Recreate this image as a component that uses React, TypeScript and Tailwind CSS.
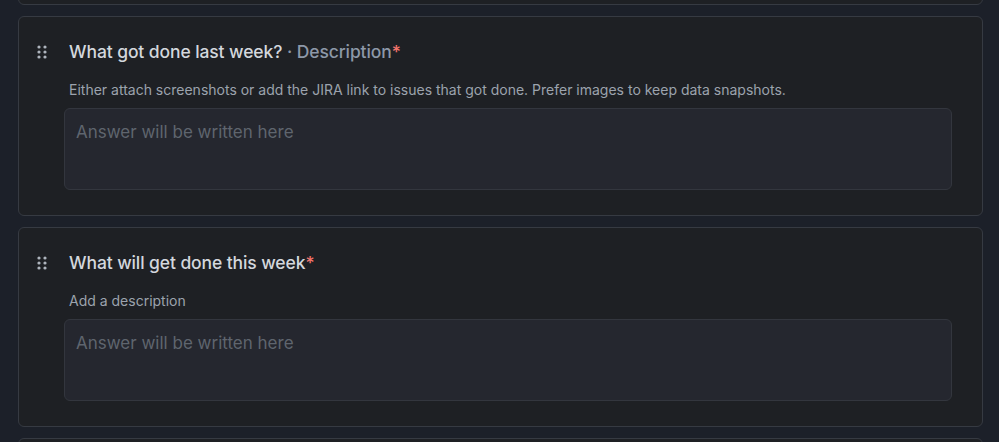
import React from "react";

const DragHandle = () => (
  <svg width="10" height="14" viewBox="0 0 10 14" className="shrink-0">
    {[0, 1, 2].map((r) =>
      [0, 1].map((c) => (
        <circle key={`${r}-${c}`} cx={2 + c * 6} cy={2 + r * 5} r={1.6} fill="#aeb4bd" />
      ))
    )}
  </svg>
);

function QuestionCard(props: { title: string; sub?: string; desc: string }) {
  return (
    <div className="rounded-md border border-[#363a42] bg-[#1e2024] pl-[16px] pr-[30px] pt-[22px] pb-[25px]">
      <div className="flex items-center h-[26px]">
        <div className="w-[34px] flex pl-[2px]">
          <DragHandle />
        </div>
        <h2 className="text-[17.5px] font-medium text-[#d3d7dd] tracking-[-0.1px]">
          {props.title}
          {props.sub && <span className="text-[#8d98a8]"> · {props.sub}</span>}
          <span className="text-[#f3746c]">*</span>
        </h2>
      </div>
      <p className="ml-[34px] mt-[15px] text-[14px] leading-5 text-[#9ca3ad]">{props.desc}</p>
      <div className="ml-[29px] mt-[8px] h-[82px] rounded-md border border-[#33363e] bg-[#25272f] px-[11px] pt-[11px]">
        <span className="text-[17px] text-[#5f656e]">Answer will be written here</span>
      </div>
    </div>
  );
}

export default function App() {
  return (
    <div
      className="w-[999px] h-[442px] overflow-hidden bg-[#1c2029] pl-[18px] pr-[16px] flex flex-col gap-[11px]"
      style={{ fontFamily: "Inter, 'Noto Sans', sans-serif" }}
    >
      <div className="-mt-[40px] h-[45px] shrink-0 rounded-md border border-[#363a42] bg-[#1e2024]" />
      <QuestionCard
        title="What got done last week?"
        sub="Description"
        desc="Either attach screenshots or add the JIRA link to issues that got done. Prefer images to keep data snapshots."
      />
      <QuestionCard title="What will get done this week" desc="Add a description" />
      <div className="h-[60px] shrink-0 rounded-md border border-[#363a42] bg-[#1e2024]" />
    </div>
  );
}
